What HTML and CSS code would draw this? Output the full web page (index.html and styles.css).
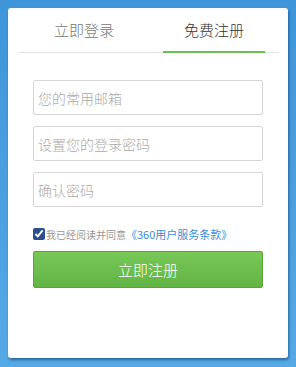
FILE: index.html
```html
<!DOCTYPE html>
<html lang="zh-CN">
<head>
    <meta charset="UTF-8">
    <meta name="viewport" content="width=device-width, initial-scale=1.0">
    <title>免费注册</title>
    <link rel="stylesheet" href="styles.css">
</head>
<body>
    <div class="card">
        <div class="tabs">
            <div class="tab">立即登录</div>
            <div class="tab active">免费注册</div>
        </div>
        <form class="regForm">
            <input type="text" class="field" placeholder="您的常用邮箱">
            <input type="password" class="field" placeholder="设置您的登录密码">
            <input type="password" class="field" placeholder="确认密码">
            <label class="agree">
                <input type="checkbox" checked>我已经阅读并同意<a href="#">《360用户服务条款》</a>
            </label>
            <button type="button" class="submit">立即注册</button>
        </form>
    </div>
</body>
</html>
```

FILE: styles.css
```css
* {
    box-sizing: border-box;
}

body {
    margin: 0;
    height: 367px;
    padding: 8px 8px 0 8px;
    background: linear-gradient(#3e95da, #55aae6);
    font-family: "Noto Sans CJK SC", "Liberation Sans", sans-serif;
}

.card {
    width: 280px;
    height: 350px;
    background-color: #fff;
    border-radius: 3px;
    box-shadow: 1px 2px 3px rgba(10, 60, 110, 0.6);
    padding: 0 9px 0 11px;
}

.tabs {
    display: flex;
    border-bottom: 1px solid #e2e2e2;
    height: 45px;
}

.tab {
    flex: 1;
    display: flex;
    justify-content: center;
    align-items: center;
    font-size: 15px;
    font-weight: 300;
    color: #777;
    padding-bottom: 2px;
}

.tab.active {
    color: #333;
    position: relative;
}

.tab.active::after {
    content: "";
    position: absolute;
    left: 14px;
    right: 14px;
    bottom: -1px;
    height: 2px;
    background-color: #6cbf4c;
}

.regForm {
    display: flex;
    flex-direction: column;
    padding: 27px 16px 0 14px;
}

.field {
    height: 35px;
    margin-bottom: 11px;
    border: 1px solid #d6d6d6;
    border-radius: 2px;
    padding: 0 4px;
    font-size: 14px;
    font-weight: 300;
    font-family: inherit;
    color: #333;
}

.field::placeholder {
    color: #aaa;
}

.agree {
    display: flex;
    align-items: center;
    font-size: 10px;
    color: #999;
    margin-top: 9px;
    height: 14px;
}

.agree input {
    width: 12px;
    height: 12px;
    margin: 0 1px 0 0;
    accent-color: #2a4f8f;
}

.agree a {
    color: #3b8fd6;
    text-decoration: none;
    font-size: 11px;
}

.submit {
    margin-top: 10px;
    height: 37px;
    border: 1px solid #5ca43f;
    border-radius: 2px;
    background: linear-gradient(#78c858, #62b444);
    color: #fff;
    font-size: 15px;
    font-weight: 300;
    font-family: inherit;
}
```
